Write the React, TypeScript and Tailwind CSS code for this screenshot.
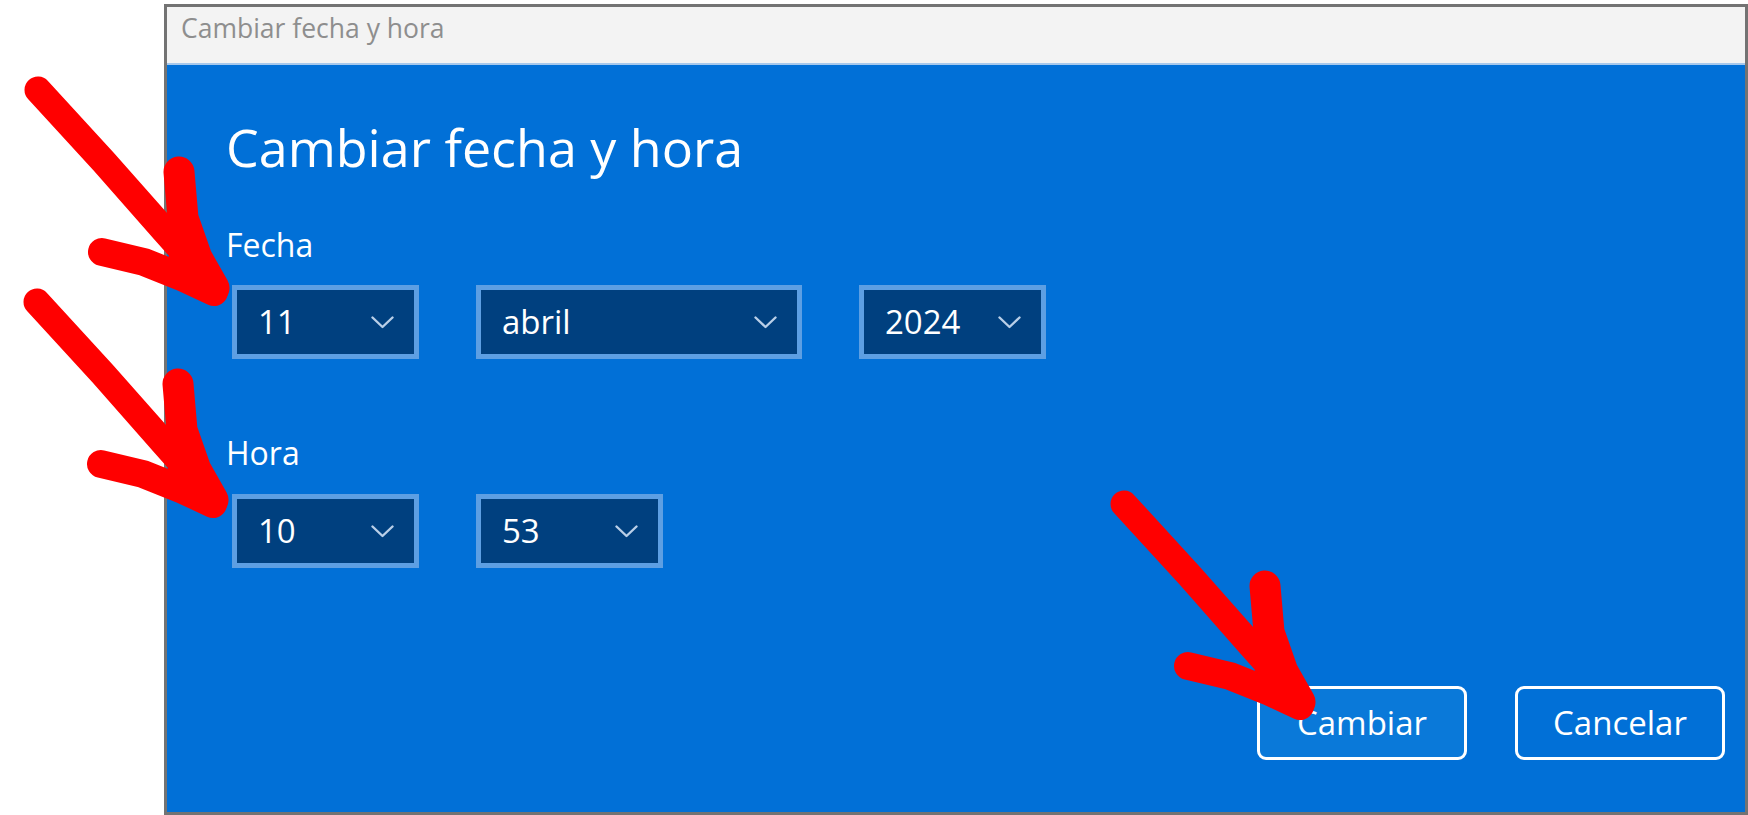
import React from "react";

function Chevron() {
  return (
    <svg width="23" height="13" viewBox="0 0 23 13" fill="none">
      <path
        d="M1.5 1.5 L11.5 11 L21.5 1.5"
        stroke="#b9cfe8"
        strokeWidth="2.4"
        strokeLinecap="round"
        strokeLinejoin="round"
      />
    </svg>
  );
}

function Select({ value, w }: { value: string; w: string }) {
  return (
    <div
      className={`${w} h-[74px] border-[5px] border-[#5d9fe3] bg-[#00407f] flex items-center justify-between pl-[21px] pr-[20px]`}
    >
      <span className="text-[33px] leading-[40px] text-white">{value}</span>
      <Chevron />
    </div>
  );
}

function Arrow({ x, y }: { x: number; y: number }) {
  return (
    <g transform={`translate(${x} ${y})`} fill="none" stroke="#ff0000" strokeLinecap="round" strokeLinejoin="round">
      <path d="M-186 -208 L-120 -136 L-60 -68 L-12 -14" strokeWidth="27" />
      <path d="M-45 -126 L-41 -80 L-27 -40 L-10 -10" strokeWidth="31" />
      <path d="M-122 -46 L-80 -36 L-40 -20 L-10 -6" strokeWidth="28" />
      <polygon points="0,0 -28,-70 -70,-26" fill="#ff0000" stroke="none" />
    </g>
  );
}

export default function App() {
  return (
    <div className="relative w-[1748px] h-[815px] bg-white overflow-hidden font-['Open_Sans','Noto_Sans',sans-serif]">
      <div className="flex pl-[164px] pt-[4px]">
        <div className="w-[1584px] h-[811px] border-[3px] border-[#737373] flex flex-col">
          <div className="h-[56px] bg-[#f3f3f3] pl-[14px] pt-[3px]">
            <span className="text-[26.5px] leading-[36px] text-[#8e8e8e]">Cambiar fecha y hora</span>
          </div>
          <div className="h-[2px] bg-[#a6c8ec]" />
          <div className="flex-1 bg-[#0170d7] pl-[59px] pt-[50px] pr-[20px] flex flex-col">
            <div className="text-[52px] leading-[64px] font-normal text-white">Cambiar fecha y hora</div>
            <div className="mt-[46px] text-[32px] leading-[40px] text-white">Fecha</div>
            <div className="mt-[20px] ml-[6px] flex gap-[57px]">
              <Select value="11" w="w-[187px]" />
              <Select value="abril" w="w-[326px]" />
              <Select value="2024" w="w-[187px]" />
            </div>
            <div className="mt-[74px] text-[32px] leading-[40px] text-white">Hora</div>
            <div className="mt-[21px] ml-[6px] flex gap-[57px]">
              <Select value="10" w="w-[187px]" />
              <Select value="53" w="w-[187px]" />
            </div>
            <div className="mt-[118px] flex justify-end gap-[48px]">
              <button className="w-[210px] h-[74px] rounded-[9px] border-[3px] border-white bg-[#0a79d9] text-[33px] leading-[40px] text-white flex items-center justify-center">
                Cambiar
              </button>
              <button className="w-[210px] h-[74px] rounded-[9px] border-[3px] border-white bg-transparent text-[33px] leading-[40px] text-white flex items-center justify-center">
                Cancelar
              </button>
            </div>
          </div>
        </div>
      </div>
      <svg className="absolute inset-0 pointer-events-none" width="1748" height="815" viewBox="0 0 1748 815">
        <Arrow x={224} y={298} />
        <Arrow x={223} y={510} />
        <Arrow x={1310} y={712} />
      </svg>
    </div>
  );
}
